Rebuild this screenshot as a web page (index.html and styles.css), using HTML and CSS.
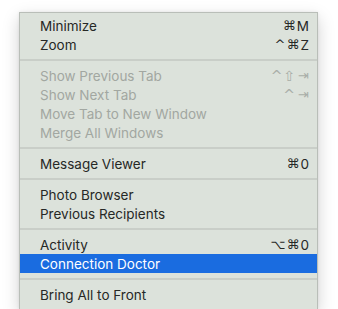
FILE: index.html
```html
<!DOCTYPE html>
<html>
<head>
<meta charset="utf-8">
<link rel="stylesheet" href="styles.css">
</head>
<body>
<div class="menu">
  <div class="item"><span class="label">Minimize</span><span class="keys"><span class="mods">⌘</span><span class="key">M</span></span></div>
  <div class="item"><span class="label">Zoom</span><span class="keys"><span class="mods">^⌘</span><span class="key">Z</span></span></div>
  <div class="sep"></div>
  <div class="item disabled"><span class="label">Show Previous Tab</span><span class="keys small"><span class="mods">^⇧</span><span class="key">⇥</span></span></div>
  <div class="item disabled"><span class="label">Show Next Tab</span><span class="keys small"><span class="mods">^</span><span class="key">⇥</span></span></div>
  <div class="item disabled"><span class="label">Move Tab to New Window</span></div>
  <div class="item disabled"><span class="label">Merge All Windows</span></div>
  <div class="sep"></div>
  <div class="item"><span class="label">Message Viewer</span><span class="keys"><span class="mods">⌘</span><span class="key">0</span></span></div>
  <div class="sep"></div>
  <div class="item"><span class="label">Photo Browser</span></div>
  <div class="item"><span class="label">Previous Recipients</span></div>
  <div class="sep"></div>
  <div class="item"><span class="label">Activity</span><span class="keys"><span class="mods">⌥⌘</span><span class="key">0</span></span></div>
  <div class="item selected"><span class="label">Connection Doctor</span></div>
  <div class="sep"></div>
  <div class="item"><span class="label">Bring All to Front</span></div>
</div>
</body>
</html>
```
FILE: styles.css
```css
html, body {
  margin: 0;
  padding: 0;
  background: #ffffff;
}
body {
  padding: 12px 0 0 19px;
  font-family: "Inter", "Liberation Sans", "DejaVu Sans", sans-serif;
  font-size: 13.5px;
  color: #262826;
  height: 309px;
  box-sizing: border-box;
  overflow: hidden;
}
.menu {
  box-sizing: border-box;
  width: 299px;
  height: 297px;
  background: #dce2db;
  border: 1px solid #b9beb8;
  border-bottom: none;
  padding-top: 3px;
  box-shadow: 0 6px 16px rgba(0, 0, 0, 0.18), 0 0 3px rgba(0, 0, 0, 0.08);
}
.item {
  height: 19px;
  display: flex;
  align-items: center;
  justify-content: space-between;
  padding: 0 8px 0 20px;
  white-space: nowrap;
}
.item.disabled {
  color: #a2a7a1;
}
.item.selected {
  background: #1a6ce0;
  color: #ffffff;
}
.sep {
  height: 12px;
  display: flex;
  align-items: center;
}
.sep::before {
  content: "";
  display: block;
  width: 100%;
  height: 2px;
  background: #c9cec8;
}
.keys {
  display: flex;
  align-items: center;
}
.mods {
  font-family: "DejaVu Sans", sans-serif;
  font-size: 13px;
  letter-spacing: 1px;
}
.key {
  display: inline-block;
  text-align: left;
}
.keys.small {
  color: #a9aea8;
}
.keys.small .mods {
  font-size: 14px;
}
.keys.small .key {
  font-family: "DejaVu Sans", sans-serif;
  font-size: 13px;
  margin-left: 2px;
}
```
